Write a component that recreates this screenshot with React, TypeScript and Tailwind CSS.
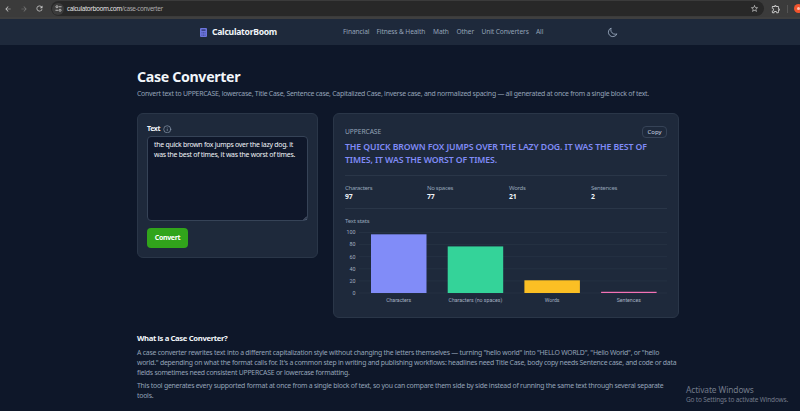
import type { ReactNode } from "react";
import { Info } from "lucide-react";
import { MdArrowBack, MdArrowForward, MdOutlineExtension, MdRefresh, MdStarBorder } from "react-icons/md";

const NAV = [
  { label: "Financial", width: "w-[26px]" },
  { label: "Fitness & Health", width: "w-[49px]" },
  { label: "Math", width: "w-[16px]" },
  { label: "Other", width: "w-[17.5px]" },
  { label: "Unit Converters", width: "w-[47px]" },
  { label: "All", width: "w-[8px]" },
];

const STATS = [
  { label: "Characters", value: 97 },
  { label: "No spaces", value: 77 },
  { label: "Words", value: 21 },
  { label: "Sentences", value: 2 },
];

const BARS = [
  { label: "Characters", value: 97, color: "#818cf8" },
  { label: "Characters (no spaces)", value: 77, color: "#34d399" },
  { label: "Words", value: 21, color: "#fbbf24" },
  { label: "Sentences", value: 2, color: "#f472b6" },
];

const TICKS = [100, 80, 60, 40, 20, 0];

function BrowserBar() {
  return (
    <div className="flex h-[19px] items-center border-b-2 border-[#3f3f3f] bg-[#3b3b3b] text-[#c7c7c7]">
      <div className="flex w-[51px] shrink-0 items-center pl-[4px]">
        <MdArrowBack size={8} />
        <MdArrowForward size={8} className="ml-[8px] text-[#777777]" />
        <MdRefresh size={9} className="ml-[7px]" />
      </div>
      <div className="flex h-[15px] w-[713px] shrink-0 items-center rounded-full bg-[#282828] pl-[1px]">
        <span className="flex h-[12px] w-[12px] items-center justify-center rounded-full bg-[#3c3c3c]">
          <svg viewBox="0 0 16 16" className="h-[7px] w-[7px]" fill="none" stroke="currentColor" strokeWidth="2">
            <path d="M9 4h6M1 12h6" />
            <circle cx="4.5" cy="4" r="2.4" />
            <circle cx="11.5" cy="12" r="2.4" />
          </svg>
        </span>
        <span className="ml-[3px] text-[6.4px] tracking-[-0.38px] whitespace-nowrap text-[#aaaaaa]">
          <span className="text-[#e4e4e4]">calculatorboom.com</span>/case-converter
        </span>
        <MdStarBorder size={9} className="mr-[5.5px] ml-auto" />
      </div>
      <MdOutlineExtension size={10} className="ml-[7px] shrink-0" />
      <span className="ml-[6px] h-[8px] w-px shrink-0 bg-[#555555]" />
      <span className="ml-[6px] flex h-[9px] w-[9px] shrink-0 items-center justify-center rounded-full bg-[#f2542d]">
        <span className="h-[3px] w-[3px] rounded-full bg-[#ffc5b3]" />
      </span>
    </div>
  );
}

function SiteHeader() {
  return (
    <header className="flex h-[26px] items-center bg-[#1e293b] pl-[200px]">
      <svg viewBox="0 0 14 18" className="h-[9px] w-[7px]">
        <rect width="14" height="18" rx="2" fill="#6c75dc" />
        <rect x="3" y="2.5" width="8" height="3.5" fill="#3b4387" />
        <path d="M3 9h2M6 9h2M9 9h2M3 12h2M6 12h2M9 12h2M3 15h2M6 15h2M9 15h2" stroke="#454d9c" strokeWidth="1.6" />
      </svg>
      <span className="ml-[5px] w-[131px] text-[8.6px] font-bold tracking-[-0.27px] text-[#f1f5f9]">CalculatorBoom</span>
      <nav className="flex gap-[7.5px] text-[6.6px] tracking-[-0.1px] whitespace-nowrap text-[#94a3b8]">
        {NAV.map((item) => (
          <a key={item.label} className={item.width}>
            {item.label}
          </a>
        ))}
      </nav>
      <svg
        viewBox="0 0 24 24"
        className="ml-[63px] h-[11px] w-[11px] text-[#94a3b8]"
        fill="none"
        stroke="currentColor"
        strokeWidth="2"
        strokeLinejoin="round"
      >
        <path d="M21.75 15A9.7 9.7 0 0 1 18 15.75c-5.4 0-9.75-4.37-9.75-9.75 0-1.33.27-2.6.75-3.75A9.75 9.75 0 0 0 3 11.25C3 16.63 7.37 21 12.75 21a9.75 9.75 0 0 0 9-6Z" />
      </svg>
    </header>
  );
}

function Card(props: { className: string; children: ReactNode }) {
  return (
    <section className={`rounded-[6px] border border-[#2a3648] bg-[#1e293b] ${props.className}`}>{props.children}</section>
  );
}

function InputCard() {
  return (
    <Card className="h-[145px] w-[181px] px-[9px] pt-[10px]">
      <label className="flex h-[10px] items-center text-[6.9px] font-bold tracking-[-0.35px] text-[#f1f5f9]">
        Text
        <Info size={8.5} strokeWidth={1.8} className="ml-[3px] text-[#94a3b8]" />
      </label>
      <div className="relative mt-[2px] w-[161px]">
        <textarea
          className="block h-[85px] w-full resize-none rounded-[4px] border border-[#364357] bg-[#0f172a] px-[6px] py-[3px] text-[6.9px] leading-[10px] tracking-[-0.25px] text-[#f1f5f9]"
          defaultValue={"the quick brown fox jumps over the lazy dog. it\nwas the best of times, it was the worst of times."}
        />
        <svg viewBox="0 0 4 4" className="absolute right-[1px] bottom-[1px] h-[4px] w-[4px]" stroke="#94a3b8" strokeWidth="0.6">
          <path d="M0.5 4 4 0.5M2.5 4 4 2.5" />
        </svg>
      </div>
      <button type="button" className="mt-[7px] h-[20px] w-[41px] rounded-[4px] bg-[#31a41b] text-[7px] font-bold tracking-[-0.35px] text-white">
        Convert
      </button>
    </Card>
  );
}

function StatsChart() {
  return (
    <svg width="324" height="82" viewBox="0 0 324 82" className="block" fontFamily="Roboto, sans-serif">
      {TICKS.map((tick) => {
        const y = 67 - tick * 0.605;
        return (
          <g key={tick}>
            <line x1="14" x2="322" y1={y} y2={y} stroke="#273345" strokeWidth="0.8" />
            <text x="10.5" y={y + 1.8} textAnchor="end" fontSize="5.3" fill="#a3afc0">
              {tick}
            </text>
          </g>
        );
      })}
      {BARS.map((bar, i) => {
        const x = 26 + i * 76.7;
        const height = bar.value * 0.605;
        return (
          <g key={bar.label}>
            <rect x={x} y={67 - height} width="55.5" height={height} fill={bar.color} />
            <text x={x + 27.7} y="76" textAnchor="middle" fontSize="5.2" fill="#a3afc0">
              {bar.label}
            </text>
          </g>
        );
      })}
    </svg>
  );
}

function ResultCard() {
  return (
    <Card className="h-[205px] w-[346px] px-[11px] pt-[12px]">
      <div className="flex h-[12px] items-center justify-between">
        <span className="text-[6.7px] tracking-[-0.07px] text-[#94a3b8]">UPPERCASE</span>
        <button type="button" className="h-[12px] w-[25px] rounded-[4px] border border-[#364357] text-[6px] leading-[10px] tracking-[-0.05px] text-[#cbd5e1]">
          Copy
        </button>
      </div>
      <p className="mt-[3px] text-[8.7px] leading-[13px] font-semibold tracking-[-0.09px] whitespace-nowrap text-[#818cf8]">
        THE QUICK BROWN FOX JUMPS OVER THE LAZY DOG. IT WAS THE BEST OF
        <br />
        TIMES, IT WAS THE WORST OF TIMES.
      </p>
      <dl className="mt-[8px] grid h-[34px] grid-cols-4 gap-x-[6px] border-y border-[#2a3648] pt-[8px]">
        {STATS.map((stat) => (
          <div key={stat.label}>
            <dt className="text-[6px] leading-[8px] tracking-[-0.3px] text-[#94a3b8]">{stat.label}</dt>
            <dd className="text-[6.8px] leading-[9px] font-bold tracking-[-0.1px] text-[#f1f5f9]">{stat.value}</dd>
          </div>
        ))}
      </dl>
      <h2 className="mt-[8px] h-[9px] text-[6px] leading-[9px] tracking-[-0.22px] text-[#94a3b8]">Text stats</h2>
      <StatsChart />
    </Card>
  );
}

export default function App() {
  return (
    <div className="relative h-[411px] w-[800px] overflow-hidden bg-[#0e1729] font-['Noto_Sans','Open_Sans',sans-serif]">
      <BrowserBar />
      <SiteHeader />
      <main className="w-[690px] pt-[23px] pl-[137px]">
        <h1 className="text-[14.2px] leading-[18px] font-bold tracking-[-0.34px] text-[#f1f5f9]">Case Converter</h1>
        <p className="mt-[3px] text-[6.9px] leading-[10px] tracking-[-0.248px] whitespace-nowrap text-[#94a3b8]">
          Convert text to UPPERCASE, lowercase, Title Case, Sentence case, Capitalized Case, inverse case, and normalized spacing — all generated at once from a single block of text.
        </p>
        <div className="mt-[14px] flex w-[542px] items-start justify-between">
          <InputCard />
          <ResultCard />
        </div>
        <article className="mt-[15px] text-[6.9px] leading-[9.8px] tracking-[-0.243px] whitespace-nowrap text-[#94a3b8]">
          <h2 className="text-[7.7px] leading-[11px] font-bold tracking-[-0.36px] text-[#f1f5f9]">What is a Case Converter?</h2>
          <p className="mt-[4px]">
            A case converter rewrites text into a different capitalization style without changing the letters themselves — turning "hello world" into "HELLO WORLD", "Hello World", or "hello
            <br />
            world." depending on what the format calls for. It's a common step in writing and publishing workflows: headlines need Title Case, body copy needs Sentence case, and code or data
            <br />
            fields sometimes need consistent UPPERCASE or lowercase formatting.
          </p>
          <p className="mt-[4px]">
            This tool generates every supported format at once from a single block of text, so you can compare them side by side instead of running the same text through several separate
            <br />
            tools.
          </p>
        </article>
      </main>
      <div className="absolute top-[384px] left-[686px] whitespace-nowrap text-[#737b8a]">
        <p className="text-[8.4px] leading-[11px] tracking-[-0.1px]">Activate Windows</p>
        <p className="text-[6.5px] leading-[9px] tracking-[-0.16px]">Go to Settings to activate Windows.</p>
      </div>
    </div>
  );
}
